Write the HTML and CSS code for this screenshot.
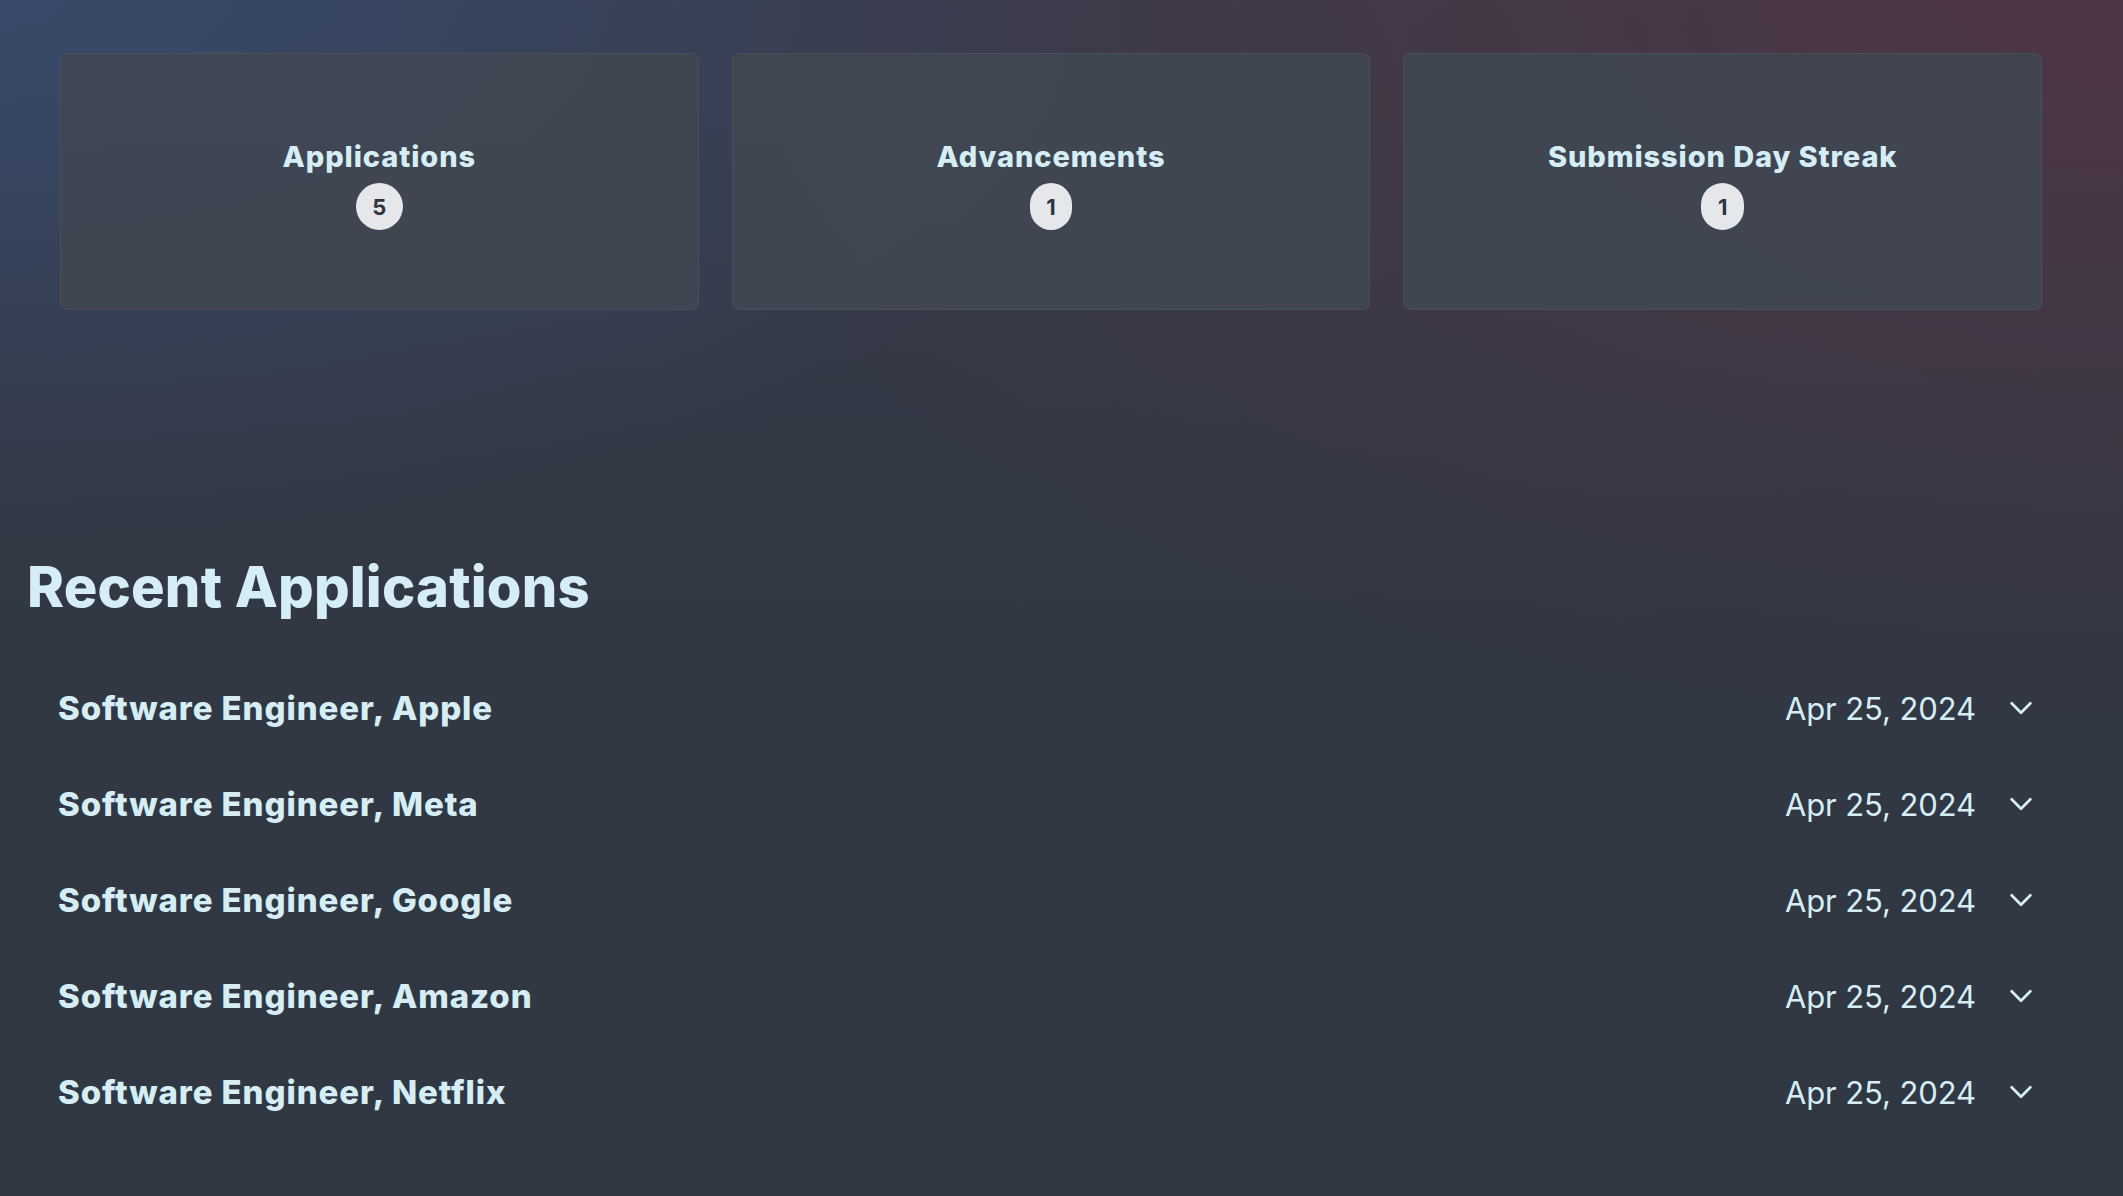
FILE: index.html
```html
<!DOCTYPE html>
<html lang="en">
<head>
<meta charset="utf-8">
<title>Dashboard</title>
<link rel="stylesheet" href="styles.css">
</head>
<body>
<main class="page">
  <section class="stats">
    <div class="card">
      <h2 class="card-title">Applications</h2>
      <span class="badge">5</span>
    </div>
    <div class="card">
      <h2 class="card-title">Advancements</h2>
      <span class="badge">1</span>
    </div>
    <div class="card">
      <h2 class="card-title">Submission Day Streak</h2>
      <span class="badge">1</span>
    </div>
  </section>

  <section class="recent">
    <h1 class="recent-title">Recent Applications</h1>
    <ul class="app-list">
      <li class="app-row">
        <span class="app-name">Software Engineer, Apple</span>
        <span class="app-meta"><span class="app-date">Apr 25, 2024</span>
          <svg class="chev" viewBox="0 0 24 24" fill="none" stroke="currentColor" stroke-width="2.2"><path stroke-linecap="round" stroke-linejoin="round" d="m19.5 8.25-7.5 7.5-7.5-7.5"/></svg></span>
      </li>
      <li class="app-row">
        <span class="app-name">Software Engineer, Meta</span>
        <span class="app-meta"><span class="app-date">Apr 25, 2024</span>
          <svg class="chev" viewBox="0 0 24 24" fill="none" stroke="currentColor" stroke-width="2.2"><path stroke-linecap="round" stroke-linejoin="round" d="m19.5 8.25-7.5 7.5-7.5-7.5"/></svg></span>
      </li>
      <li class="app-row">
        <span class="app-name">Software Engineer, Google</span>
        <span class="app-meta"><span class="app-date">Apr 25, 2024</span>
          <svg class="chev" viewBox="0 0 24 24" fill="none" stroke="currentColor" stroke-width="2.2"><path stroke-linecap="round" stroke-linejoin="round" d="m19.5 8.25-7.5 7.5-7.5-7.5"/></svg></span>
      </li>
      <li class="app-row">
        <span class="app-name">Software Engineer, Amazon</span>
        <span class="app-meta"><span class="app-date">Apr 25, 2024</span>
          <svg class="chev" viewBox="0 0 24 24" fill="none" stroke="currentColor" stroke-width="2.2"><path stroke-linecap="round" stroke-linejoin="round" d="m19.5 8.25-7.5 7.5-7.5-7.5"/></svg></span>
      </li>
      <li class="app-row">
        <span class="app-name">Software Engineer, Netflix</span>
        <span class="app-meta"><span class="app-date">Apr 25, 2024</span>
          <svg class="chev" viewBox="0 0 24 24" fill="none" stroke="currentColor" stroke-width="2.2"><path stroke-linecap="round" stroke-linejoin="round" d="m19.5 8.25-7.5 7.5-7.5-7.5"/></svg></span>
      </li>
    </ul>
  </section>
</main>
</body>
</html>
```

FILE: styles.css
```css
* { box-sizing: border-box; }

html, body {
  margin: 0;
  padding: 0;
  height: 100%;
}

body {
  font-family: Inter, "Noto Sans", sans-serif;
  color: #d5eef5;
  background-color: #303742;
  background-image:
    radial-gradient(ellipse 55% 45% at 0% 0%, rgba(56, 76, 112, 0.85), rgba(56, 76, 112, 0) 100%),
    radial-gradient(ellipse 70% 60% at 100% 0%, rgba(80, 52, 68, 0.9), rgba(80, 52, 68, 0) 100%),
    linear-gradient(180deg, #373c4a 0%, #313743 60%, #303843 100%);
  overflow: hidden;
}

.page {
  min-height: 1196px;
}

.stats {
  display: grid;
  grid-template-columns: repeat(3, 1fr);
  gap: 33px;
  width: 2042px;
  padding: 53px 0 0 60px;
}

.card {
  height: 257px;
  background: rgba(64, 71, 82, 0.95);
  border: 1.5px solid #484f5b;
  border-radius: 7px;
  display: flex;
  flex-direction: column;
  align-items: center;
  justify-content: center;
  gap: 8px;
  padding-top: 6px;
}

.card-title {
  margin: 0;
  font-size: 29px;
  font-weight: 800;
  line-height: 36px;
  letter-spacing: 0.9px;
}

.badge {
  display: inline-flex;
  align-items: center;
  justify-content: center;
  height: 47px;
  padding: 0 16.5px;
  border-radius: 24px;
  background: #e6e7eb;
  color: #2e3440;
  font-size: 22px;
  font-weight: 700;
}

.recent {
  padding: 244px 0 0 27px;
}

.recent-title {
  margin: 0;
  font-size: 56px;
  font-weight: 800;
  line-height: 67px;
  letter-spacing: 0.2px;
}

.app-list {
  list-style: none;
  margin: 0;
  padding: 39px 0 0 31px;
  width: 2009px;
}

.app-row {
  display: flex;
  align-items: center;
  justify-content: space-between;
  height: 96px;
}

.app-name {
  font-size: 33px;
  font-weight: 800;
  letter-spacing: 0.9px;
}

.app-meta {
  display: flex;
  align-items: center;
  gap: 30px;
}

.app-date {
  font-size: 31px;
  font-weight: 400;
  letter-spacing: -0.1px;
}

.chev {
  width: 30px;
  height: 30px;
  display: block;
}
```
